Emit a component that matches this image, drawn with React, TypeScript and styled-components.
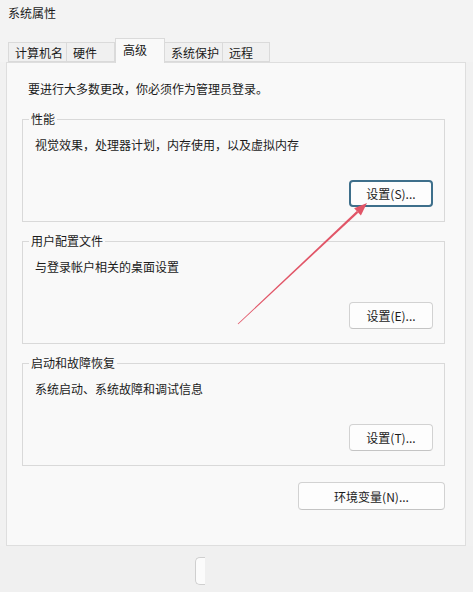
import React from "react";
import styled, { createGlobalStyle } from "styled-components";

const GlobalStyle = createGlobalStyle`
  html, body {
    margin: 0;
    padding: 0;
    background: #f0f0f0;
  }
  body {
    font-family: "Noto Sans CJK SC", "Noto Sans", sans-serif;
    font-size: 12px;
    color: #1b1b1b;
  }
`;

const Window = styled.div`
  position: relative;
  width: 473px;
  height: 592px;
  display: flex;
  flex-direction: column;
  background: #f1f1f1;
  overflow: hidden;
`;

const TitleBar = styled.div`
  height: 38px;
  box-sizing: border-box;
  padding: 5px 8px 0;
  line-height: 16px;
  background: #f3f3f3;
`;

const TabStrip = styled.div`
  display: flex;
  align-items: flex-end;
  height: 24px;
  padding-left: 8px;
  position: relative;
  z-index: 1;
  background: #f3f3f3;
`;

const Tab = styled.div<{ $width: number; $active?: boolean }>`
  box-sizing: border-box;
  width: ${(p) => p.$width}px;
  height: ${(p) => (p.$active ? 25 : 20)}px;
  margin-bottom: ${(p) => (p.$active ? -1 : 0)}px;
  padding: ${(p) => (p.$active ? "3px 0 0 7px" : "2px 0 0 6px")};
  line-height: 16px;
  border: 1px solid #dadada;
  border-bottom: ${(p) => (p.$active ? "none" : "1px solid #dadada")};
  border-left-width: ${(p) => (p.$active ? 1 : 0)}px;
  background: ${(p) => (p.$active ? "#f9f9f9" : "#f0f0f0")};
  color: #1b1b1b;

  &:first-child {
    border-left-width: 1px;
  }
`;

const Panel = styled.div`
  margin: 0 7px 0 6px;
  height: 484px;
  box-sizing: border-box;
  padding: 18px 20px 0 15px;
  background: #f9f9f9;
  border: 1px solid #dedede;
  display: flex;
  flex-direction: column;
`;

const Notice = styled.div`
  line-height: 16px;
  padding-left: 6px;
  margin-bottom: 15px;
`;

const Groups = styled.div`
  display: flex;
  flex-direction: column;
  gap: 12px;
`;

const Group = styled.fieldset`
  margin: 0;
  padding: 0;
  border: 1px solid #d9d9d9;
  min-width: 0;
`;

const Legend = styled.legend`
  margin-left: 6px;
  padding: 0 2px;
  line-height: 14px;
  color: #1b1b1b;
`;

const GroupBody = styled.div`
  display: flex;
  flex-direction: column;
  padding: 11px 11px 14px 12px;
`;

const Description = styled.div`
  line-height: 16px;
  margin-bottom: 27px;
`;

const ButtonRow = styled.div`
  display: flex;
  justify-content: flex-end;
`;

const Button = styled.button<{ $width: number; $focused?: boolean }>`
  box-sizing: border-box;
  width: ${(p) => p.$width}px;
  height: 27px;
  padding: 0;
  font-family: inherit;
  font-size: 12px;
  color: #1b1b1b;
  background: #fdfdfd;
  border-radius: 4px;
  border: ${(p) => (p.$focused ? "2px solid #3e6f8b" : "1px solid #d2d2d2")};
  border-bottom-color: ${(p) => (p.$focused ? "#3e6f8b" : "#c4c4c4")};
  cursor: default;
`;

const EnvRow = styled(ButtonRow)`
  margin-top: 16px;
`;

const Footer = styled.div`
  flex: 1;
  display: flex;
  align-items: flex-start;
  padding: 11px 0 0 195px;
  background: #f0f0f0;
`;

const ButtonStub = styled.div`
  width: 10px;
  height: 28px;
  box-sizing: border-box;
  border: 1px solid #cfcfcf;
  border-right: none;
  border-radius: 5px 0 0 5px;
  background: #fbfbfb;
`;

const Overlay = styled.svg`
  position: absolute;
  left: 0;
  top: 0;
  pointer-events: none;
`;

const tabs = [
  { label: "计算机名", width: 59 },
  { label: "硬件", width: 48 },
  { label: "高级", width: 50, active: true },
  { label: "系统保护", width: 58 },
  { label: "远程", width: 47 },
];

const groups = [
  { title: "性能", text: "视觉效果，处理器计划，内存使用，以及虚拟内存", button: "设置(S)...", focused: true },
  { title: "用户配置文件", text: "与登录帐户相关的桌面设置", button: "设置(E)..." },
  { title: "启动和故障恢复", text: "系统启动、系统故障和调试信息", button: "设置(T)..." },
];

const Arrow = () => (
  <Overlay width={473} height={592} viewBox="0 0 473 592">
    <polygon
      points="237.7,323.7 238.3,324.3 358.3,212.7 356.7,211.1"
      fill="#e15567"
    />
    <polygon points="367,203 360.9,215.5 354.1,208.2" fill="#e15567" />
  </Overlay>
);

export default function App() {
  return (
    <Window>
      <GlobalStyle />
      <TitleBar>系统属性</TitleBar>
      <TabStrip>
        {tabs.map((t) => (
          <Tab key={t.label} $width={t.width} $active={t.active}>
            {t.label}
          </Tab>
        ))}
      </TabStrip>
      <Panel>
        <Notice>要进行大多数更改，你必须作为管理员登录。</Notice>
        <Groups>
          {groups.map((g) => (
            <Group key={g.title}>
              <Legend>{g.title}</Legend>
              <GroupBody>
                <Description>{g.text}</Description>
                <ButtonRow>
                  <Button $width={84} $focused={g.focused}>
                    {g.button}
                  </Button>
                </ButtonRow>
              </GroupBody>
            </Group>
          ))}
        </Groups>
        <EnvRow>
          <Button $width={147} style={{ height: 28 }}>
            环境变量(N)...
          </Button>
        </EnvRow>
      </Panel>
      <Footer>
        <ButtonStub />
      </Footer>
      <Arrow />
    </Window>
  );
}
